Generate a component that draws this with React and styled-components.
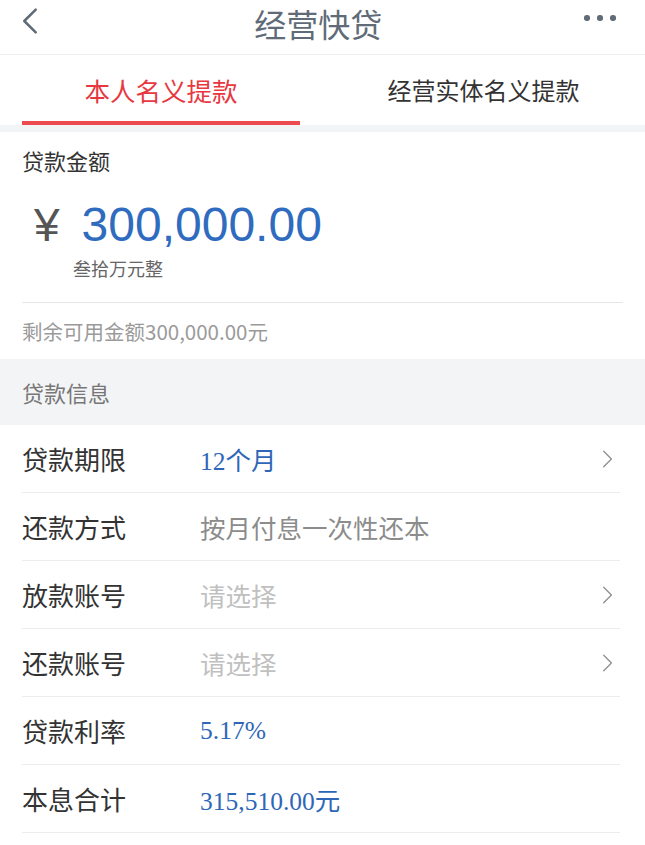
import styled, { createGlobalStyle } from 'styled-components';

const GlobalStyle = createGlobalStyle`
	body {
		margin: 0;
		background: #fff;
		font-family: "Noto Sans CJK SC", "Noto Sans", sans-serif;
	}
`;

const rows = [
	{ label: '贷款期限', value: '12个月', tone: 'blue', arrow: true },
	{ label: '还款方式', value: '按月付息一次性还本', tone: 'grey' },
	{ label: '放款账号', value: '请选择', tone: 'hint', arrow: true },
	{ label: '还款账号', value: '请选择', tone: 'hint', arrow: true },
	{ label: '贷款利率', value: '5.17%', tone: 'blue' },
	{ label: '本息合计', value: '315,510.00元', tone: 'blue' },
];

const toneColor = {
	blue: '#2f67b8',
	grey: '#8c8c8c',
	hint: '#c0c0c0',
};

function Chevron({ left }) {
	return (
		<svg width="14" height="22" viewBox="0 0 14 22" fill="none">
			<path
				d={left ? 'M12 1 L2 11 L12 21' : 'M2 2 L11 11 L2 20'}
				stroke="currentColor"
				strokeWidth={left ? 2.2 : 1.5}
				strokeLinecap="round"
				strokeLinejoin="round"
			/>
		</svg>
	);
}

export default function App() {
	return (
		<Page>
			<GlobalStyle />
			<Header>
				<BackButton>
					<Chevron left />
				</BackButton>
				<Title>经营快贷</Title>
				<More>
					<span />
					<span />
					<span />
				</More>
			</Header>
			<Tabs>
				<Tab active>本人名义提款</Tab>
				<Tab>经营实体名义提款</Tab>
			</Tabs>
			<AmountCard>
				<Caption>贷款金额</Caption>
				<AmountLine>
					<Yen>¥</Yen>
					<Amount>300,000.00</Amount>
				</AmountLine>
				<Words>叁拾万元整</Words>
				<Remain>剩余可用金额300,000.00元</Remain>
			</AmountCard>
			<SectionTitle>贷款信息</SectionTitle>
			<List>
				{rows.map((r) => (
					<Row key={r.label}>
						<Label>{r.label}</Label>
						<Value tone={r.tone}>{r.value}</Value>
						{r.arrow && (
							<Arrow>
								<Chevron />
							</Arrow>
						)}
					</Row>
				))}
			</List>
		</Page>
	);
}

const Page = styled.div`
	width: 645px;
	min-height: 845px;
	background: #fff;
`;

const Header = styled.div`
	height: 54px;
	display: flex;
	align-items: flex-start;
	justify-content: space-between;
	padding: 0 29px 0 22px;
	border-bottom: 1px solid #ededed;
`;

const BackButton = styled.div`
	width: 22px;
	height: 28px;
	margin-top: 7px;
	display: flex;
	color: #5f6b77;
	svg {
		width: 16px;
		height: 28px;
	}
`;

const Title = styled.div`
	font-size: 32px;
	line-height: 46px;
	color: #5f6b77;
	margin-left: 8px;
`;

const More = styled.div`
	display: flex;
	gap: 7.5px;
	margin-top: 15px;
	span {
		width: 5.5px;
		height: 5.5px;
		border-radius: 50%;
		background: #5f6b77;
	}
`;

const Tabs = styled.div`
	display: grid;
	grid-template-columns: 278px 1fr;
	height: 70px;
	padding-left: 22px;
	border-bottom: 7px solid #f3f4f6;
`;

const Tab = styled.div`
	display: flex;
	align-items: center;
	justify-content: center;
	font-size: ${(p) => (p.active ? '25.5px' : '24px')};
	color: ${(p) => (p.active ? '#e8383f' : '#333')};
	border-bottom: 4px solid ${(p) => (p.active ? '#ec4b52' : 'transparent')};
	padding-left: ${(p) => (p.active ? '0' : '22px')};
	padding-top: 2px;
`;

const AmountCard = styled.div`
	padding: 0 22px;
`;

const Caption = styled.div`
	font-size: 22px;
	color: #333;
	padding-top: 12px;
	line-height: 32px;
`;

const AmountLine = styled.div`
	display: flex;
	align-items: baseline;
	gap: 22px;
	margin-top: 25px;
	padding-left: 12px;
`;

const Yen = styled.span`
	font-family: "Liberation Sans", sans-serif;
	font-size: 46px;
	color: #555;
	line-height: 1;
`;

const Amount = styled.span`
	font-family: "Liberation Sans", sans-serif;
	font-size: 48px;
	color: #2f6cc0;
	line-height: 1;
`;

const Words = styled.div`
	font-size: 18px;
	color: #666;
	padding-left: 51px;
	margin-top: 6px;
	line-height: 26px;
	padding-bottom: 21px;
	border-bottom: 1px solid #e6e6e6;
`;

const Remain = styled.div`
	font-size: 20.5px;
	color: #9a9a9a;
	line-height: 56px;
`;

const SectionTitle = styled.div`
	background: #f3f4f6;
	height: 66px;
	display: flex;
	align-items: center;
	padding-left: 22px;
	font-size: 22px;
	color: #777;
`;

const List = styled.div`
	padding: 0 25px 0 22px;
`;

const Row = styled.div`
	height: 67px;
	display: flex;
	align-items: center;
	border-bottom: 1px solid #ececec;
`;

const Label = styled.div`
	width: 178px;
	font-size: 26px;
	color: #333;
`;

const Value = styled.div`
	flex: 1;
	font-family: ${(p) => (p.tone === 'blue' ? '"Liberation Serif", "Noto Sans CJK SC", serif' : '"Noto Sans CJK SC", sans-serif')};
	font-size: 25.5px;
	color: ${(p) => toneColor[p.tone]};
`;

const Arrow = styled.div`
	color: #8e8e8e;
	display: flex;
	margin-right: 6px;
	svg {
		width: 12px;
		height: 20px;
	}
`;
